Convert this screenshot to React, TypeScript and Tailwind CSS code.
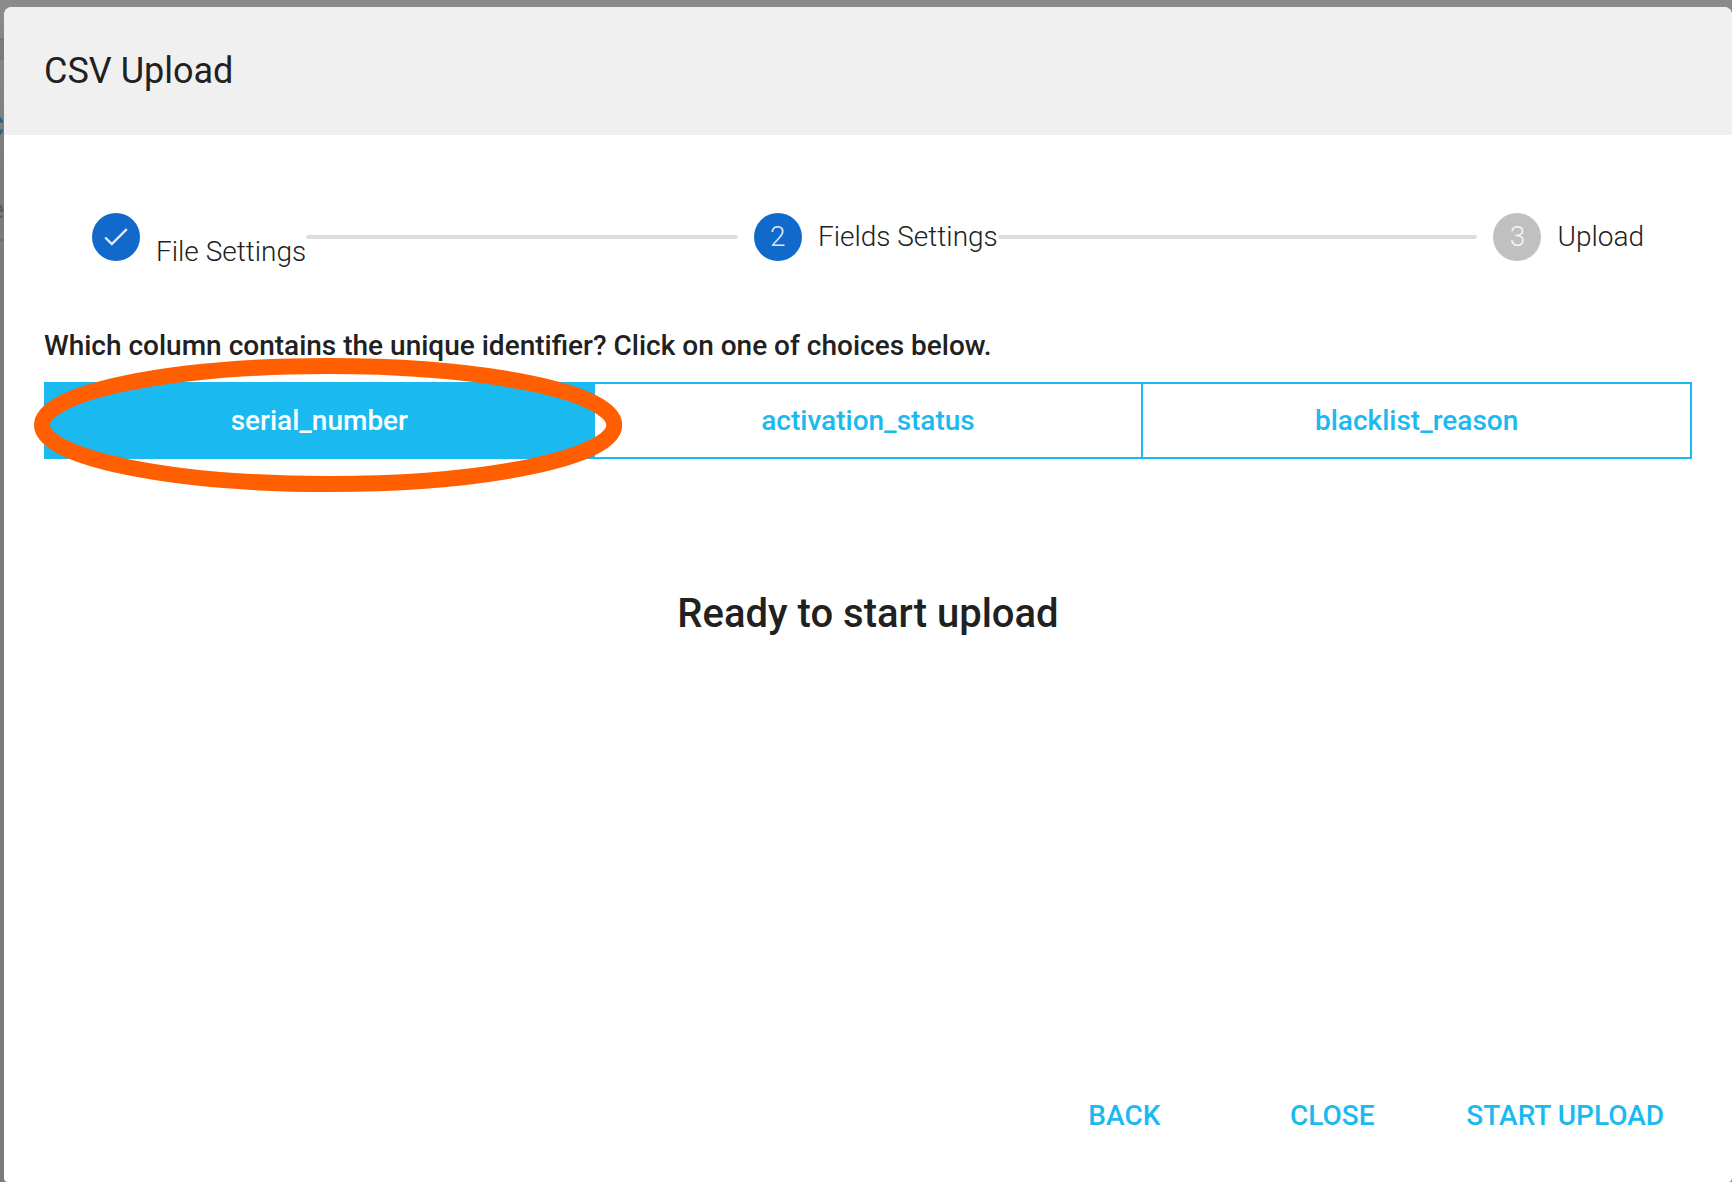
import { useState } from "react";

const columns = ["serial_number", "activation_status", "blacklist_reason"];

const actionClass =
  "h-[72px] min-w-44 cursor-pointer rounded px-7 text-[28px] leading-9 font-medium text-[#1abaf0] uppercase hover:bg-sky-50";

function Circle({ done, children }: { done?: boolean; children: React.ReactNode }) {
  return (
    <span
      className={
        "flex size-12 shrink-0 items-center justify-center rounded-full text-[28px] leading-9 text-white/87 " +
        (done ? "bg-[#116acb]" : "bg-[#c0c0c0]")
      }
    >
      {children}
    </span>
  );
}

/* Sliver of the dimmed page that shows beside the dialog. */
function PageBehind() {
  return (
    <div aria-hidden="true" className="absolute inset-y-0 left-0 flex w-1 flex-col items-end overflow-hidden text-[28px]">
      <div className="mt-[38px] h-[22px] w-full border-t-2 border-[#757575] bg-[#7c7b7b]" />
      <div className="mt-[49px] leading-9 font-medium text-[#226880]">C</div>
      <div className="mt-[47px] leading-9 text-[#5c5b5a]">e</div>
      <div className="mt-[11px] h-0.5 w-full bg-[#707070]" />
    </div>
  );
}

export default function App() {
  const [selected, setSelected] = useState(columns[0]);

  return (
    <div className="relative flex min-h-screen flex-col bg-linear-to-b from-[#8b8b8b] to-[#7c7b7a] to-15% pt-[7px] pl-1 font-['Roboto',sans-serif] text-[#212121]">
      <PageBehind />
      <div
        role="dialog"
        aria-labelledby="dialog-title"
        className="relative flex grow flex-col overflow-hidden rounded-t-lg rounded-b-sm bg-white"
      >
        <header className="flex h-32 items-center bg-[#f0f0f0] px-10">
          <h1 id="dialog-title" className="text-4xl leading-10">
            CSV Upload
          </h1>
        </header>

        <main className="flex grow flex-col px-10">
          <ol className="mt-[78px] flex h-12 items-center px-12 text-[28px] leading-9 font-light">
            <li className="flex items-center gap-4">
              <Circle done>
                <svg viewBox="0 0 24 18" className="h-[18px] w-6" aria-label="Completed">
                  <path d="M1.2 9.5 7.8 16 22.8 1.2" fill="none" stroke="currentColor" strokeWidth="2.4" />
                </svg>
              </Circle>
              <span className="pt-[30px]">File Settings</span>
            </li>
            <li aria-hidden="true" className="mr-4 h-1 grow-9 basis-0 rounded-xs bg-[#dedede]" />
            <li aria-current="step" className="flex items-center gap-4">
              <Circle done>2</Circle>
              <span>Fields Settings</span>
            </li>
            <li aria-hidden="true" className="mr-4 h-1 grow-10 basis-0 rounded-xs bg-[#dedede]" />
            <li className="flex items-center gap-4">
              <Circle>3</Circle>
              <span>Upload</span>
            </li>
          </ol>

          <h2 className="mt-[67px] text-[28px] leading-9 font-medium">
            Which column contains the unique identifier? Click on one of choices below.
          </h2>

          <div className="relative mt-[18px] flex">
            {columns.map((name) => (
              <button
                key={name}
                type="button"
                aria-pressed={name === selected}
                onClick={() => setSelected(name)}
                className={
                  "-ml-0.5 h-[77px] flex-1 cursor-pointer border-2 border-[#1abaf0] text-[28px] leading-9 font-medium first:ml-0 " +
                  (name === selected ? "bg-[#1abaf0] text-white" : "text-[#1abaf0]")
                }
              >
                {name}
              </button>
            ))}
            <svg
              viewBox="0 0 588 134"
              preserveAspectRatio="none"
              className="pointer-events-none absolute -top-6 -left-2.5 h-[134px] w-[calc(33.33%+39px)]"
              aria-hidden="true"
            >
              <ellipse cx="294" cy="67" rx="286" ry="59" fill="none" stroke="#ff5f00" strokeWidth="16" />
            </svg>
          </div>

          <p className="mt-[131px] text-center text-[40px] leading-12 font-medium">Ready to start upload</p>
        </main>

        <footer className="flex justify-end px-10 pb-[30px]">
          <button type="button" className={actionClass + " mr-8"}>
            Back
          </button>
          <button type="button" className={actionClass + " mr-[18px]"}>
            Close
          </button>
          <button type="button" className={actionClass}>
            Start Upload
          </button>
        </footer>
      </div>
    </div>
  );
}
